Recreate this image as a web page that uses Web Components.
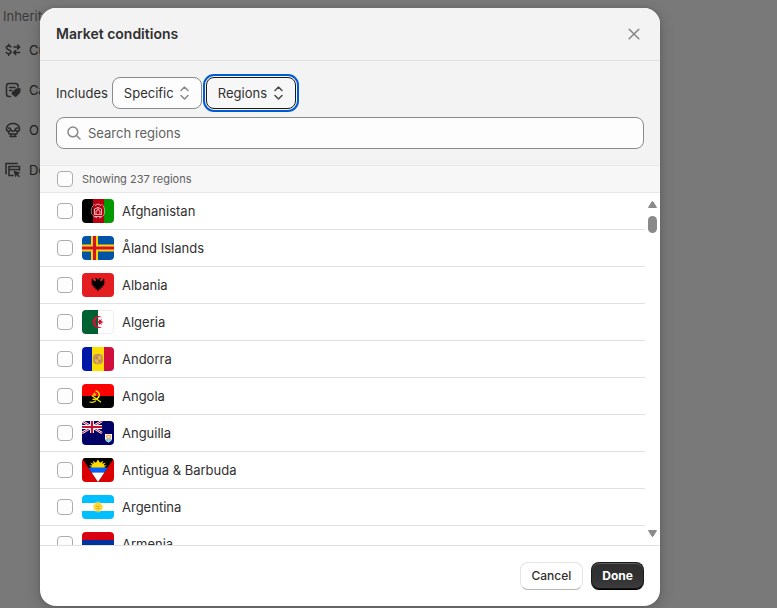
<!DOCTYPE html>
<html lang="en">
<head>
<meta charset="utf-8">
<meta name="viewport" content="width=device-width, initial-scale=1">
<title>Market conditions</title>
<style>
  html, body { height: 100%; }
  body {
    margin: 0; overflow: hidden; background: #797979; color: #303030;
    font: 400 13px/20px Inter, "Liberation Sans", sans-serif;
  }
</style>
</head>
<body>
<market-page>
  <inherit-panel slot="page"></inherit-panel>
  <conditions-dialog>
    <condition-filter slot="filter"></condition-filter>
    <region-list slot="list"></region-list>
    <action-button slot="actions">Cancel</action-button>
    <action-button slot="actions" primary>Done</action-button>
  </conditions-dialog>
</market-page>

<script>
const define = (name, markup, setup) => {
  const template = document.createElement('template');
  template.innerHTML = '<style>*{box-sizing:border-box}button,input,select{font:inherit;color:inherit;margin:0}svg{display:block}</style>' + markup;
  customElements.define(name, class extends HTMLElement {
    constructor() {
      super();
      this.attachShadow({ mode: 'open' }).append(template.content.cloneNode(true));
    }
    connectedCallback() {
      if (setup && !this.ready) { this.ready = true; setup(this, this.shadowRoot); }
    }
  });
};

define('market-page', `
<style>
  :host { display: grid; height: 100%; grid-template: minmax(0, 1fr) / minmax(0, 1fr); }
  .page, .layer { grid-area: 1 / 1; min-height: 0; }
  .layer { position: relative; display: flex; padding: 8px 0 2px 40px; }
</style>
<div class="page"><slot name="page"></slot></div>
<div class="layer"><slot></slot></div>`);

const GLYPHS = {
  currency: '<g fill="none" stroke="currentColor" stroke-width="1.6" stroke-linecap="round" stroke-linejoin="round"><path d="M5.7 4.8C5.2 4.2 4.5 3.9 3.7 3.9C2.4 3.9 1.4 4.6 1.4 5.8C1.4 8.3 5.9 7.3 5.9 9.8C5.9 11 4.9 11.7 3.6 11.7C2.6 11.7 1.8 11.3 1.3 10.6M3.7 2.5V3.9M3.7 11.7V13.2M9 5H14.6M12.6 3L14.7 5L12.6 7M14.6 10.5H8.7M10.7 8.5L8.6 10.5L10.7 12.5"/></g>',
  catalog: '<path fill="none" stroke="currentColor" stroke-width="1.5" stroke-linecap="round" d="M13 5V4Q13 1.500 10.500 1.500H4Q1.500 1.500 1.500 4V12Q1.500 14.500 4 14.500H5.500M4.500 5.500H10M4.500 8.500H7"/><path fill="currentColor" d="M11 6.500L14.300 6Q15.700 6 15.600 7.500L15.200 10.800L11.500 14.500Q10.500 15.400 9.500 14.500L7 12.200Q6.200 11.200 7 10.300Z"/>',
  store: '<path fill="none" stroke="currentColor" stroke-width="1.5" stroke-linecap="round" stroke-linejoin="round" d="M3.300 9.500C1.900 8.800 1.200 7.600 1.500 6.400C2 3.500 4.700 1.500 8 1.500S14 3.500 14.500 6.400C14.800 7.600 14.100 8.800 12.700 9.500M3.300 9.500Q5.500 9.200 5.600 7.200Q6.500 9.300 8 9.300T10.400 7.200Q10.500 9.200 12.700 9.500M5.600 7.200Q4.800 5.500 3.500 6.200M10.400 7.200Q11.200 5.500 12.500 6.200M3.300 9.500L4.200 12H11.800L12.700 9.500M6 12V14.500M10 12V14.500M5 14.500H11"/>',
  domain: '<path fill="none" stroke="currentColor" stroke-width="1.5" stroke-linecap="square" stroke-linejoin="miter" d="M1 11.500V1.500H12M8 13.500H4V4.500H14.500V8M4 7.500H14"/><path fill="currentColor" d="M8.500 8.500L15.500 10.700L12.900 12L15 14.200L13.900 15.200L11.800 13.100L10.500 15.500Z"/>'
};
define('inherit-panel', `
<style>
  :host { display: block; padding-top: 6px; color: #212121; }
  h2 { margin: 0 0 14px 3px; font: inherit; color: #3a3a3a; }
  ul { display: grid; gap: 20px; margin: 0; padding: 0 0 0 5px; list-style: none; }
  li { display: flex; align-items: center; gap: 8px; height: 20px; }
  svg { width: 16px; height: 16px; color: #292929; }
</style>
<h2>Inherit</h2><ul></ul>`, (host, root) => {
  root.querySelector('ul').innerHTML = [['currency', 'Cu'], ['catalog', 'Ca'], ['store', 'O'], ['domain', 'De']]
    .map(([g, t]) => `<li><svg viewBox="0 0 16 16" aria-hidden="true">${GLYPHS[g]}</svg>${t}</li>`).join('');
});

define('conditions-dialog', `
<style>
  :host { display: flex; flex: 1; max-width: 620px; min-height: 0; }
  section { display: flex; flex-direction: column; flex: 1; min-width: 0; overflow: hidden;
    background: #fff; border-radius: 16px; box-shadow: 0 4px 16px rgba(0,0,0,.2), 0 0 4px rgba(0,0,0,.12); }
  header { display: flex; align-items: center; justify-content: space-between; padding: 16px; background: #f3f3f3; border-bottom: 1px solid #e1e1e1; }
  h1 { margin: 0; font-size: 13px; line-height: 20px; font-weight: 600; font-size: 14px; }
  header button { display: grid; place-items: center; width: 20px; height: 20px; padding: 0; border: 0; background: none; color: #858585; }
  footer { display: flex; justify-content: flex-end; gap: 8px; padding: 16px; border-top: 1px solid #e1e1e1; }
  ::slotted([slot=list]) { flex: 1; min-height: 0; }
</style>
<section role="dialog" aria-labelledby="title">
  <header><h1 id="title">Market conditions</h1>
    <button type="button" aria-label="Close"><svg width="12" height="12" viewBox="0 0 12 12"><path d="M1.200 1.200L10.800 10.800M10.800 1.200L1.200 10.800" stroke="currentColor" stroke-width="1.500" stroke-linecap="round"/></svg></button>
  </header>
  <slot name="filter"></slot><slot name="list"></slot>
  <footer><slot name="actions"></slot></footer>
</section>`);

define('action-button', `
<style>
  :host { display: block; }
  button { height: 28px; padding: 0 11px; border: 1px solid #e3e3e3; border-bottom-color: #b5b5b5; border-radius: 8px;
    background: #fff; font-size: 12px; line-height: 16px; font-weight: 500; }
  :host([primary]) button { padding: 0 10px; color: #fff; font-weight: 700; background: linear-gradient(#303030 50%, #3d3d3d); border-color: #1a1a1a;
    border-bottom-color: #000; box-shadow: inset 0 1px 0 #5c5c5c, inset 0 -1px 0 #111; }
</style>
<button type="button"><slot></slot></button>`);

define('condition-select', `
<style>
  :host { display: inline-grid; align-items: center; }
  select, svg { grid-area: 1 / 1; }
  select { appearance: none; height: 32px; padding: 0 27px 0 11px; border: 1px solid #8a8a8a; border-radius: 8px; background: #fdfdfd; line-height: 20px; }
  svg { justify-self: end; margin-right: 13px; color: #8a8a8a; pointer-events: none; }
  :host([active]) select { background: #f7f7f7; border-color: #1a1a1a; outline: 2px solid #005bd3; outline-offset: 1px; }
  :host([active]) svg { color: #4a4a4a; }
</style>
<select></select>
<svg width="9" height="14" viewBox="0 0 9 14"><path d="M1 4.500L4.500 1L8 4.500M1 9.500L4.500 13L8 9.500" fill="none" stroke="currentColor" stroke-width="1.500" stroke-linecap="round" stroke-linejoin="round"/></svg>`, (host, root) => {
  const select = root.querySelector('select');
  select.setAttribute('aria-label', host.getAttribute('label'));
  select.add(new Option(host.getAttribute('value')));
});

define('condition-filter', `
<style>
  :host { display: grid; gap: 8px; padding: 16px; background: #f3f3f3; }
  .line { display: flex; align-items: center; gap: 4px; }
  .search { display: flex; align-items: center; gap: 7px; height: 32px; padding: 0 10px; border: 1px solid #8a8a8a; border-radius: 8px; background: #fdfdfd; color: #8a8a8a; }
  input { flex: 1; min-width: 0; padding: 0; border: 0; outline: 0; background: none; color: #303030; line-height: 20px; }
  input::placeholder { color: #616161; opacity: 1; }
</style>
<div class="line"><span>Includes</span>
  <condition-select label="Match" value="Specific"></condition-select>
  <condition-select label="Condition" value="Regions" active></condition-select></div>
<label class="search"><svg width="14" height="14" viewBox="0 0 14 14" aria-hidden="true"><g fill="none" stroke="currentColor" stroke-width="1.500" stroke-linecap="round"><circle cx="5.900" cy="5.900" r="4.900"/><path d="M9.500 9.500L13 13"/></g></svg>
<input type="text" placeholder="Search regions" aria-label="Search regions"></label>`);

const FLAGS = {
  af: '<path d="M0 0h11v24H0z"/><path fill="#b80010" d="M11 0h11v24H11z"/><path fill="#090" d="M22 0h10v24H22z"/><g fill="none" stroke="#fff" stroke-width=".8" stroke-opacity=".85"><path d="M12.500 5Q8.500 9 9.500 14Q11 18 15.500 19M19.500 5Q23.500 9 22.500 14Q21.500 18 17 19" stroke-dasharray="1.500 .5"/><path d="M12.500 15.500V10Q16 7 19.500 10V15.500ZM14 15V12Q16 9.500 18 12V15M16 8V11M13 6.500Q16 3.500 19 6.500M12.500 17.500H19.500"/></g>',
  ax: '<path fill="#0053a5" d="M0 0h32v24H0z"/><path fill="#ffd300" d="M9 0h7v24H9zM0 8.500h32v7H0z"/><path fill="#d21034" d="M11 0h3v24h-3zM0 10.500h32v3H0z"/>',
  al: '<path fill="#e41e20" d="M0 0h32v24H0z"/><path d="M16 7.200L14.800 5L12.800 5L14.200 6.800L13.500 8.300L11.500 7.500L10.500 5.300L9.500 6.500L10.200 7.500L9 8L10.200 9L9 9.800L10.500 10.500L9.200 11.500L11 12L10.200 13.200L12 13L11.500 15L13.500 14.200L13.500 16.500L15 16.300L16 18.500L17 16.300L18.500 16.500L18.500 14.200L20.500 15L20 13L21.800 13.200L21 12L22.800 11.500L21.500 10.500L23 9.800L21.800 9L23 8L21.800 7.500L22.500 6.500L21.500 5.300L20.500 7.500L18.500 8.300L17.800 6.800L19.200 5L17.200 5Z"/>',
  dz: '<path fill="#fff" d="M0 0h32v24H0z"/><path fill="#006233" d="M0 0h16v24H0z"/><path fill="#d21034" d="M20.500 7.500A6 6 0 1 0 20.500 16.500A5 5 0 1 1 20.500 7.500ZM21.500 12L19.200 12.900L20 15.300L18.200 13.700L16.500 15.300L16.900 12.900L14.500 12L16.900 11.100L16.500 8.700L18.200 10.300L20 8.700L19.200 11.100Z"/><rect x=".5" y=".5" width="31" height="23" rx="3.500" fill="none" stroke="#000" stroke-opacity=".07"/>',
  ad: '<path fill="#0018a8" d="M0 0h10v24H0z"/><path fill="#fedf00" d="M10 0h12v24H10z"/><path fill="#d0103a" d="M22 0h10v24H22z"/><path fill="#cfa45f" d="M11.500 8.500Q12 6.500 14 7.500Q16 5.500 18 7.500Q20 6.500 20.500 8.500V15.500Q19 17.500 16 17.500Q13 17.500 11.500 15.500Z"/><path stroke="#a98256" fill="none" stroke-width=".8" d="M11.800 9V15L14 17M20.200 9V15L18 17M13 8H19"/><path fill="#e0703a" d="M13.500 9.500h2v2.500h-2zM17 13h1.800v2h-1.800z"/><path fill="#f0c23a" d="M16.500 9.500h2v2.500h-2zM13.500 13h2v2h-2z"/>',
  ao: '<path fill="#f00" d="M0 0h32v12H0z"/><path d="M0 12h32v12H0z"/><g fill="none" stroke="#ffec00"><path d="M13.500 6.700Q17.800 8 17.200 11.800Q16 16 10.500 15.300" stroke-width="1.400"/><path d="M9.800 11.500L19 18.200" stroke-width="1.200"/><path d="M7.500 18Q12.500 19 14 16.500" stroke-width="1.200"/></g><path fill="#ffec00" d="M12.500 8L13.100 9.700H14.900L13.500 10.700L14 12.300L12.500 11.300L11 12.300L11.500 10.700L10.100 9.700H11.900Z"/>',
  ai: '<path fill="#006" d="M0 0h32v24H0z"/><path stroke="#fff" stroke-width="2.400" d="M0 0L20 12M20 0L0 12"/><path stroke="#c8102e" d="M0 0L20 12M20 0L0 12"/><path fill="#fff" d="M8 0h4v12H8zM0 4h20v4H0z"/><path fill="#c8102e" d="M8.900 0h2.200v12H8.900zM0 4.900h20v2.200H0z"/><path fill="#fff" d="M23 13h7v5Q29.500 20.500 26.500 21.500Q23.500 20.500 23 18Z"/><path fill="#7bd1e8" d="M23 18H30Q29 20.800 26.500 21.500Q24 20.800 23 18Z"/><path fill="none" stroke="#ff9d2e" stroke-width="1.200" d="M25 17L24.500 15L26.500 14.200L28.500 15L28 17L26.500 17.500Z"/>',
  ag: '<path fill="#d00" d="M0 0h32v24H0z"/><path fill="#000" d="M0 0h32L16 24Z"/><path fill="#fd0" d="M8.500 10L10 9L7 7.600L10.500 7.300L8.200 4.500L11.700 5.700L11 2.800L13.900 4.700L16 1.500L18.100 4.700L21 2.800L20.300 5.700L23.800 4.500L21.500 7.300L25 7.600L22 9L23.500 10Z"/><path fill="#0061ff" d="M6.300 9.500H25.700L22.400 14.500H9.600Z"/><path fill="#fff" d="M9.600 14.500H22.400L16 24Z"/>',
  ar: '<path fill="#00bfff" d="M0 0h32v24H0z"/><path fill="#fff" d="M0 8h32v8H0z"/><circle cx="16" cy="12" r="4.900" fill="none" stroke="#ffe06a" stroke-dasharray="1.200 .6"/><circle cx="16" cy="12" r="4.400" fill="#ffd633"/><path stroke="#cfa22c" fill="none" stroke-width=".8" d="M14 11L16 12L18 11M14.500 13.500H17.500"/>',
  am: '<path fill="#d90012" d="M0 0h32v8H0z"/><path fill="#0033a0" d="M0 8h32v8H0z"/><path fill="#f2a800" d="M0 16h32v8H0z"/>'
};
define('region-row', `
<style>
  :host { display: block; border-bottom: 1px solid #e1e1e1; }
  label { display: flex; align-items: center; gap: 8px; height: 36px; padding-left: 17px; }
  input { appearance: none; flex: none; width: 16px; height: 16px; margin-right: 1px; border: 1px solid #adadad; border-radius: 4px; background: #fdfdfd; }
  input:checked { background: #303030; }
  svg { flex: none; width: 32px; height: 24px; border-radius: 4px; overflow: hidden; }
</style>
<label><input type="checkbox"><svg viewBox="0 0 32 24" aria-hidden="true"></svg><span><slot></slot></span></label>`, (host, root) => {
  root.querySelector('svg').innerHTML = FLAGS[host.getAttribute('code')];
});

define('scroll-rail', `
<style>
  :host { display: flex; flex-direction: column; align-items: center; justify-content: space-between; width: 15px; padding: 8px 0; color: #8a8a8a; }
  .top { display: grid; gap: 8px; }
  .thumb { width: 9px; height: 17px; border-radius: 5px; background: currentColor; }
  .shape { fill: currentColor; stroke: currentColor; stroke-linejoin: round; }
</style>
<div class="top"><svg width="9" height="7" viewBox="0 0 9 7"><path class="shape" d="M4 .8H5L8.500 6.500H.5Z"/></svg><div class="thumb"></div></div>
<svg width="9" height="7" viewBox="0 0 9 7"><path class="shape" d="M.5 .5H8.500L5 6.300H4Z"/></svg>`);

define('region-list', `
<style>
  :host { display: flex; flex-direction: column; }
  .summary { display: flex; align-items: center; gap: 9px; flex: none; height: 28px; padding-left: 17px; background: #f7f7f7;
    border: solid #e8e8e8; border-width: 1px 0; color: #616161; font-size: 11px; line-height: 16px; }
  input { appearance: none; width: 16px; height: 16px; border: 1px solid #adadad; border-radius: 4px; background: #fdfdfd; }
  .body { display: flex; flex: 1; min-height: 0; }
  .rows { flex: 1; min-width: 0; overflow-y: auto; scrollbar-width: none; }
</style>
<label class="summary"><input type="checkbox"><span>Showing 237 regions</span></label>
<div class="body"><div class="rows"></div><scroll-rail></scroll-rail></div>`, (host, root) => {
  const regions = { af: 'Afghanistan', ax: 'Åland Islands', al: 'Albania', dz: 'Algeria', ad: 'Andorra', ao: 'Angola', ai: 'Anguilla', ag: 'Antigua & Barbuda', ar: 'Argentina', am: 'Armenia' };
  for (const [code, name] of Object.entries(regions)) {
    const row = document.createElement('region-row');
    row.setAttribute('code', code);
    row.textContent = name;
    root.querySelector('.rows').append(row);
  }
});
</script>
</body>
</html>
